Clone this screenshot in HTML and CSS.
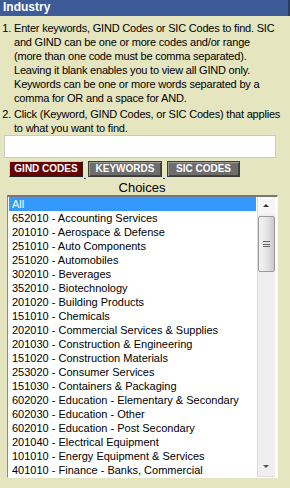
FILE: index.html
```
<html>
<head>
  <link rel="stylesheet" href="styles.css">
</head>
<body>
<div class="header">Industry</div>
<ol class="steps">
  <li>Enter keywords, GIND Codes or SIC Codes to find. SIC<br>
    and GIND can be one or more codes and/or range<br>
    (more than one code must be comma separated).<br>
    Leaving it blank enables you to view all GIND only.<br>
    Keywords can be one or more words separated by a<br>
    comma for OR and a space for AND.</li>
  <li>Click (Keyword, GIND Codes, or SIC Codes) that applies<br>
    to what you want to find.</li>
</ol>
<div class="search"><input type="text" class="searchBox"></div>
<div class="tabs">
  <span class="btn active">GIND CODES</span><span class="gap"></span><span class="btn">KEYWORDS</span><span class="gap"></span><span class="btn">SIC CODES</span>
</div>
<div class="choicesTitle">Choices</div>
<div class="choices">
  <div class="items">
    <div class="item selected">All</div>
    <div class="item">652010 - Accounting Services</div>
    <div class="item">201010 - Aerospace &amp; Defense</div>
    <div class="item">251010 - Auto Components</div>
    <div class="item">251020 - Automobiles</div>
    <div class="item">302010 - Beverages</div>
    <div class="item">352010 - Biotechnology</div>
    <div class="item">201020 - Building Products</div>
    <div class="item">151010 - Chemicals</div>
    <div class="item">202010 - Commercial Services &amp; Supplies</div>
    <div class="item">201030 - Construction &amp; Engineering</div>
    <div class="item">151020 - Construction Materials</div>
    <div class="item">253020 - Consumer Services</div>
    <div class="item">151030 - Containers &amp; Packaging</div>
    <div class="item">602020 - Education - Elementary &amp; Secondary</div>
    <div class="item">602030 - Education - Other</div>
    <div class="item">602010 - Education - Post Secondary</div>
    <div class="item">201040 - Electrical Equipment</div>
    <div class="item">101010 - Energy Equipment &amp; Services</div>
    <div class="item">401010 - Finance - Banks, Commercial</div>
  </div>
  <div class="scrollbar">
    <div class="arrow up"></div>
    <div class="thumb"><span class="grip"></span></div>
    <div class="track"></div>
    <div class="arrow down"></div>
  </div>
</div>
</body>
</html>
```

FILE: styles.css
```
body {
  margin: 0;
  background-color: #e5e5bf;
  font-family: 'Liberation Sans', Arial, sans-serif;
  color: #000;
  width: 290px;
  height: 488px;
  overflow: hidden;
}

.header {
  background-color: #3d5b97;
  color: #fff;
  font-weight: bold;
  font-size: 12px;
  height: 16px;
  line-height: 15px;
  padding-left: 3px;
  border-right: 2px solid #2a3c62;
}

.steps {
  margin: 5px 0 0 0;
  padding: 0 0 0 14px;
  font-size: 11px;
  line-height: 14px;
  letter-spacing: -0.2px;
  white-space: nowrap;
}

.steps li {
  margin-bottom: 2px;
}

.steps li:last-child {
  margin-bottom: 0;
}

.search {
  padding: 0 14px 0 4px;
}

.searchBox {
  display: block;
  width: 100%;
  height: 23px;
  margin: 0;
  border: 1px solid #c9c9c9;
  background: #fff;
  box-sizing: border-box;
}

.tabs {
  display: flex;
  padding: 3px 0 0 9px;
  height: 18px;
}

.btn {
  display: block;
  height: 16px;
  line-height: 14px;
  box-sizing: border-box;
  padding: 0;
  font-size: 10px;
  font-weight: bold;
  white-space: nowrap;
  color: #fff;
  background-color: #6d6d6d;
  border: 1px solid #3a3a3a;
  box-shadow: inset 1px 1px 0 #9a9a9a, inset -1px -1px 0 #444;
  text-align: center;
}

.btn.active {
  background-color: #650000;
  border-color: #d0d0d0 #222 #222 #d0d0d0;
  box-shadow: none;
  width: 74px;
}

.btn:nth-child(3) {
  width: 74px;
}

.btn:nth-child(5) {
  width: 73px;
}

.gap {
  width: 4px;
  height: 18px;
  border-bottom: 1px solid #1a3ea8;
  margin-right: 1px;
  box-sizing: border-box;
  transform: scaleX(0.5);
}

.choicesTitle {
  text-align: center;
  font-size: 13px;
  line-height: 14px;
  padding: 2px 0 0 0;
  margin-left: -6px;
}

.choices {
  display: flex;
  margin-left: 7px;
  width: 271px;
  height: 283px;
  box-sizing: border-box;
  border-top: 2px solid #777;
  border-left: 1px solid #8a8a8a;
  border-right: 1px solid #fff;
  border-bottom: 1px solid #fff;
  background: #fff;
  padding-right: 2px;
}

.items {
  flex: 1;
  padding: 0 1px 0 1px;
  font-size: 11px;
  line-height: 14px;
  overflow: hidden;
}

.item {
  height: 14px;
  padding-left: 3px;
  white-space: nowrap;
}

.item.selected {
  background-color: #3399ff;
  color: #fff;
}

.scrollbar {
  width: 17px;
  display: flex;
  flex-direction: column;
  background-color: #efefef;
  border-left: 1px solid #dcdcdc;
  border-bottom: 1px solid #dcdcdc;
}

.arrow {
  height: 17px;
  position: relative;
}

.arrow:after {
  content: "";
  position: absolute;
  left: 5px;
  border-left: 3px solid transparent;
  border-right: 3px solid transparent;
}

.arrow.up {
  background-color: #f6f6f6;
}

.arrow.up:after {
  top: 7px;
  border-bottom: 3px solid #333;
}

.arrow.down:after {
  top: 6px;
  border-top: 3px solid #555;
}

.thumb {
  height: 54px;
  margin: 2px 0 0 0;
  border: 1px solid #9a9a9a;
  border-radius: 2px;
  background: linear-gradient(to right, #f4f4f4, #e2e2e2 60%, #c8c8c8);
  display: flex;
  align-items: center;
  justify-content: center;
}

.grip {
  display: block;
  width: 7px;
  height: 6px;
  border-top: 1px solid #666;
  border-bottom: 1px solid #666;
  background: linear-gradient(#666, #666) center / 7px 1px no-repeat;
  box-sizing: border-box;
}

.track {
  flex: 1;
}
```
